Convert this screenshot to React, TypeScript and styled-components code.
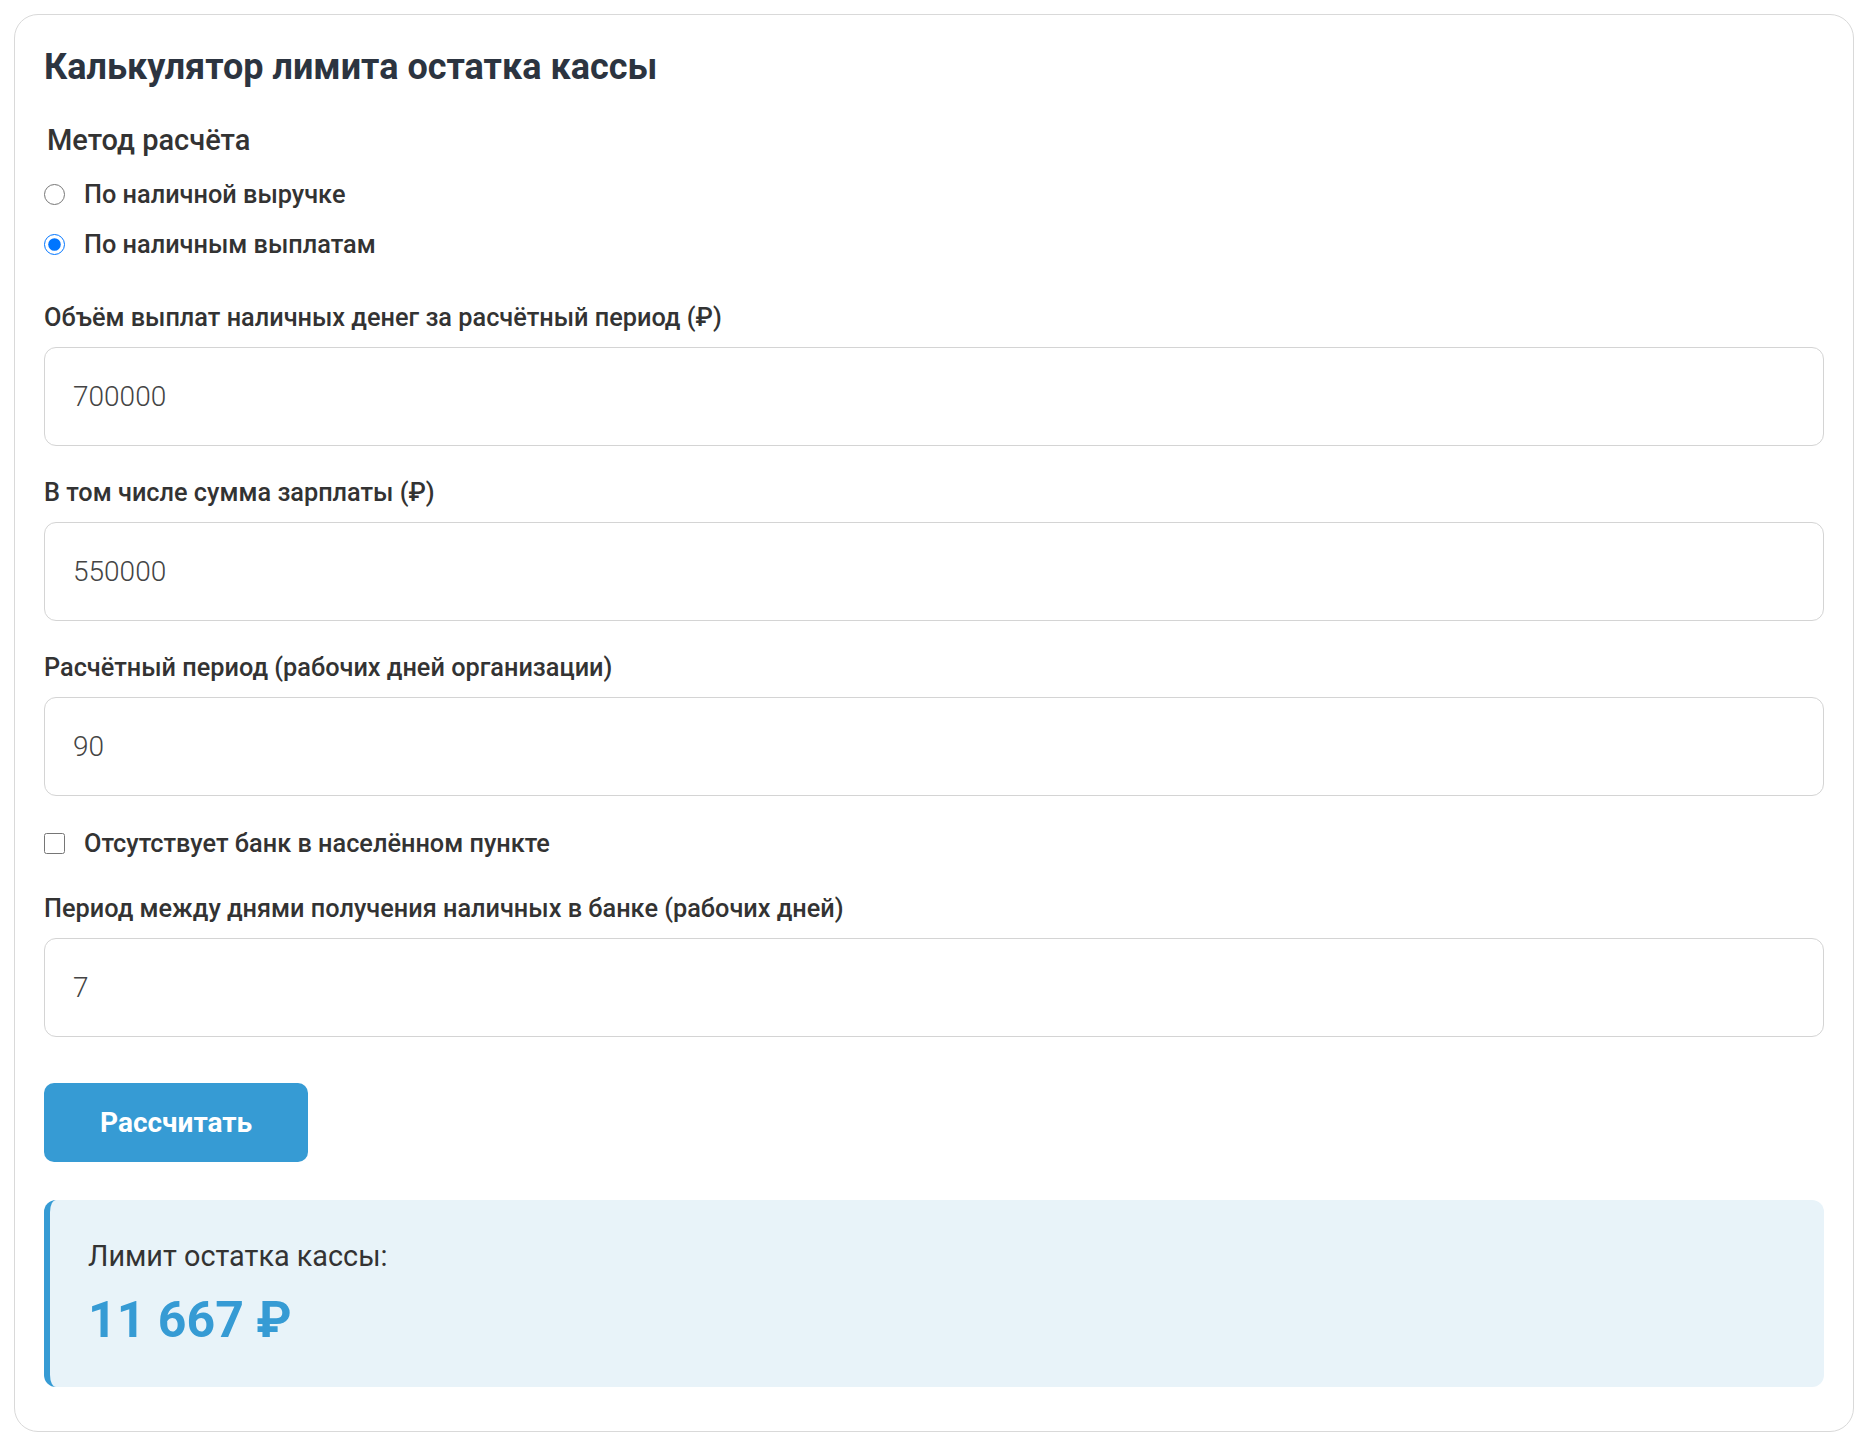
import React, { useState } from 'react'
import styled, { createGlobalStyle } from 'styled-components'

const GlobalStyle = createGlobalStyle`
  html, body {
    margin: 0;
    padding: 0;
    background: #ffffff;
  }
  body {
    font-family: Roboto, "Liberation Sans", Arial, sans-serif;
    color: #333333;
  }
  * {
    box-sizing: border-box;
  }
`

const Page = styled.div`
  padding: 14px 10px 10px 14px;
`

const Card = styled.div`
  display: flex;
  flex-direction: column;
  border: 1px solid #d9d9d9;
  border-radius: 24px;
  padding: 31px 29px 44px 29px;
  background: #ffffff;
`

const Title = styled.h2`
  margin: 0 0 34px 0;
  font-size: 36px;
  line-height: 43px;
  font-weight: 700;
  color: #2c3440;
`

const Form = styled.form`
  display: flex;
  flex-direction: column;
  gap: 32px;
`

const Fieldset = styled.fieldset`
  border: none;
  margin: 0 0 12px 0;
  padding: 0;
  display: flex;
  flex-direction: column;
  gap: 20px;
`

const Legend = styled.legend`
  padding: 0 0 0 3px;
  margin-bottom: 22px;
  font-size: 29px;
  line-height: 34px;
  font-weight: 500;
  color: #333333;
`

const OptionRow = styled.label<{ $after?: number }>`
  display: flex;
  align-items: center;
  gap: 19px;
  height: 30px;
  font-size: 25.3px;
  font-weight: 500;
  color: #333333;
  cursor: pointer;
  margin-bottom: ${p => p.$after ?? 0}px;
`

const Radio = styled.input`
  width: 21px;
  height: 21px;
  margin: 0;
  accent-color: #0075ff;
`

const Checkbox = styled.input`
  width: 21px;
  height: 21px;
  margin: 0;
`

const Field = styled.div`
  display: flex;
  flex-direction: column;
  gap: 14px;
`

const Label = styled.label`
  font-size: 25.3px;
  line-height: 30px;
  font-weight: 500;
  color: #333333;
`

const Input = styled.input`
  height: 99px;
  width: 100%;
  border: 1px solid #d4d4d4;
  border-radius: 12px;
  padding: 0 28px;
  font-family: Roboto, "Liberation Sans", Arial, sans-serif;
  font-size: 28px;
  font-weight: 300;
  color: #444444;
  outline: none;
`

const Button = styled.button`
  align-self: flex-start;
  height: 79px;
  padding: 0 56px;
  margin-top: 14px;
  border: none;
  border-radius: 10px;
  background: #369bd4;
  color: #ffffff;
  font-family: Roboto, "Liberation Sans", Arial, sans-serif;
  font-size: 28px;
  font-weight: 700;
  cursor: pointer;
`

const Result = styled.div`
  margin-top: 6px;
  background: #e8f3f9;
  border-left: 6px solid #369bd4;
  border-radius: 12px;
  padding: 39px 38px 38px 38px;
  display: flex;
  flex-direction: column;
  gap: 18px;
`

const ResultCaption = styled.div`
  font-size: 28.8px;
  line-height: 34px;
  color: #333333;
`

const ResultValue = styled.div`
  font-size: 50px;
  line-height: 58px;
  font-weight: 700;
  color: #369bd4;
`

export default function App() {
  const [method, setMethod] = useState('payouts')
  const [noBank, setNoBank] = useState(false)
  const [payouts, setPayouts] = useState('700000')
  const [salary, setSalary] = useState('550000')
  const [period, setPeriod] = useState('90')
  const [interval, setInterval] = useState('7')

  return (
    <Page>
      <GlobalStyle />
      <Card>
        <Title>Калькулятор лимита остатка кассы</Title>
        <Form onSubmit={e => e.preventDefault()}>
          <Fieldset>
            <Legend>Метод расчёта</Legend>
            <OptionRow>
              <Radio
                type="radio"
                name="method"
                checked={method === 'revenue'}
                onChange={() => setMethod('revenue')}
              />
              По наличной выручке
            </OptionRow>
            <OptionRow>
              <Radio
                type="radio"
                name="method"
                checked={method === 'payouts'}
                onChange={() => setMethod('payouts')}
              />
              По наличным выплатам
            </OptionRow>
          </Fieldset>

          <Field>
            <Label htmlFor="payouts">Объём выплат наличных денег за расчётный период (₽)</Label>
            <Input id="payouts" value={payouts} onChange={e => setPayouts(e.target.value)} />
          </Field>

          <Field>
            <Label htmlFor="salary">В том числе сумма зарплаты (₽)</Label>
            <Input id="salary" value={salary} onChange={e => setSalary(e.target.value)} />
          </Field>

          <Field>
            <Label htmlFor="period">Расчётный период (рабочих дней организации)</Label>
            <Input id="period" value={period} onChange={e => setPeriod(e.target.value)} />
          </Field>

          <OptionRow $after={4}>
            <Checkbox type="checkbox" checked={noBank} onChange={e => setNoBank(e.target.checked)} />
            Отсутствует банк в населённом пункте
          </OptionRow>

          <Field>
            <Label htmlFor="interval">Период между днями получения наличных в банке (рабочих дней)</Label>
            <Input id="interval" value={interval} onChange={e => setInterval(e.target.value)} />
          </Field>

          <Button type="submit">Рассчитать</Button>

          <Result>
            <ResultCaption>Лимит остатка кассы:</ResultCaption>
            <ResultValue>11 667 ₽</ResultValue>
          </Result>
        </Form>
      </Card>
    </Page>
  )
}
